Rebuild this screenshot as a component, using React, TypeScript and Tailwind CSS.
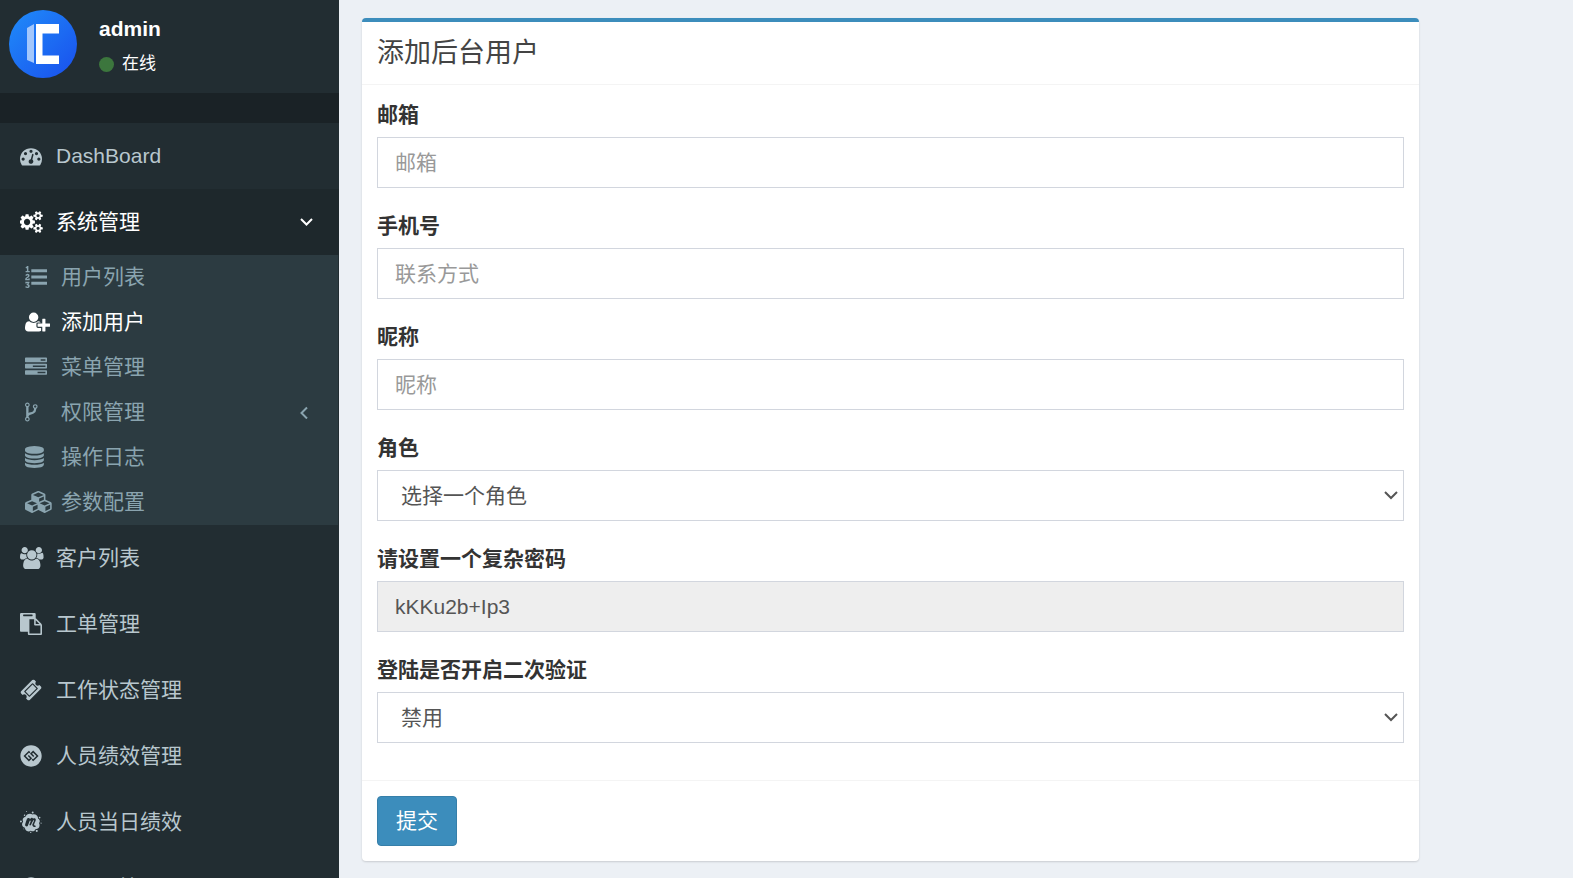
import React, { useState } from "react";
import { FaGgCircle, FaMeetup } from "react-icons/fa";

interface IconProps {
    path: string;
    viewBox: string;
}

function Icon({ path, viewBox }: IconProps) {
    return (
        <svg viewBox={viewBox} className="h-[22px] w-auto shrink-0" fill="currentColor" aria-hidden="true">
            <path d={path} />
        </svg>
    );
}

const icons = {
    dashboard: "M384 1152q0-53-37.5-90.5t-90.5-37.5-90.5 37.5-37.5 90.5 37.5 90.5 90.5 37.5 90.5-37.5 37.5-90.5zm192-448q0-53-37.5-90.5t-90.5-37.5-90.5 37.5-37.5 90.5 37.5 90.5 90.5 37.5 90.5-37.5 37.5-90.5zm428 481l101-382q6-26-7.5-48.5t-38.5-29.5-48 6.5-30 39.5l-101 382q-60 5-107 43.5t-63 98.5q-20 77 20 146t117 89 146-20 89-117q16-60-6-117t-72-91zm660-33q0-53-37.5-90.5t-90.5-37.5-90.5 37.5-37.5 90.5 37.5 90.5 90.5 37.5 90.5-37.5 37.5-90.5zm-640-640q0-53-37.5-90.5t-90.5-37.5-90.5 37.5-37.5 90.5 37.5 90.5 90.5 37.5 90.5-37.5 37.5-90.5zm448 192q0-53-37.5-90.5t-90.5-37.5-90.5 37.5-37.5 90.5 37.5 90.5 90.5 37.5 90.5-37.5 37.5-90.5zm320 448q0 261-141 483-19 29-54 29h-1402q-35 0-54-29-141-221-141-483 0-182 71-348t191-286 286-191 348-71 348 71 286 191 191 286 71 348z",
    cogs: "M832 896q0-106-75-181t-181-75-181 75-75 181 75 181 181 75 181-75 75-181zm768 512q0-52-38-90t-90-38-90 38-38 90q0 53 37.5 90.5t90.5 37.5 90.5-37.5 37.5-90.5zm0-1024q0-52-38-90t-90-38-90 38-38 90q0 53 37.5 90.5t90.5 37.5 90.5-37.5 37.5-90.5zm-384 421v185q0 10-7 19.5t-16 10.5l-155 24q-11 35-32 76 34 48 90 115 7 11 7 20 0 12-7 19-23 30-82.5 89.5t-78.5 59.5q-11 0-21-7l-115-90q-37 19-77 31-11 108-23 155-7 24-30 24h-186q-11 0-20-7.5t-10-17.5l-23-153q-34-10-75-31l-118 89q-7 7-20 7-11 0-21-8-144-133-144-160 0-9 7-19 10-14 41-53t47-61q-23-44-35-82l-152-24q-10-1-17-9.5t-7-19.5v-185q0-10 7-19.5t16-10.5l155-24q11-35 32-76-34-48-90-115-7-11-7-20 0-12 7-20 22-30 82-89t79-59q11 0 21 7l115 90q34-18 77-32 11-108 23-154 7-24 30-24h186q11 0 20 7.5t10 17.5l23 153q34 10 75 31l118-89q8-7 20-7 11 0 21 8 144 133 144 160 0 8-7 19-12 16-42 54t-45 60q23 48 34 82l152 23q10 2 17 10.5t7 19.5zm640 533v140q0 16-149 31-12 27-30 52 51 113 51 138 0 4-4 7-122 71-124 71-8 0-46-47t-52-68q-20 2-30 2t-30-2q-14 21-52 68t-46 47q-2 0-124-71-4-3-4-7 0-25 51-138-18-25-30-52-149-15-149-31v-140q0-16 149-31 13-29 30-52-51-113-51-138 0-4 4-7 4-2 35-20t59-34 30-16q8 0 46 46.5t52 67.5q20-2 30-2t30 2q51-71 92-112l6-2q4 0 124 70 4 3 4 7 0 25-51 138 17 23 30 52 149 15 149 31zm0-1024v140q0 16-149 31-12 27-30 52 51 113 51 138 0 4-4 7-122 71-124 71-8 0-46-47t-52-68q-20 2-30 2t-30-2q-14 21-52 68t-46 47q-2 0-124-71-4-3-4-7 0-25 51-138-18-25-30-52-149-15-149-31v-140q0-16 149-31 13-29 30-52-51-113-51-138 0-4 4-7 4-2 35-20t59-34 30-16q8 0 46 46.5t52 67.5q20-2 30-2t30 2q51-71 92-112l6-2q4 0 124 70 4 3 4 7 0 25-51 138 17 23 30 52 149 15 149 31z",
    listOl: "M381 1620q0 80-54.5 126t-135.5 46q-106 0-172-66l57-88q49 45 106 45 29 0 50.5-14.5t21.5-42.5q0-64-105-56l-26-56q8-10 32.5-43.5t42.5-54 37-38.5v-1q-16 0-48.5 1t-48.5 1v53h-106v-152h333v88l-95 115q51 12 81 49t30 88zm2-627v159h-362q-6-36-6-54 0-51 23.5-93t56.5-68 66-47.5 56.5-43.5 23.5-45q0-25-14.5-38.5t-39.5-13.5q-46 0-81 58l-85-59q24-51 71.5-79.5t105.5-28.5q73 0 123 41.5t50 112.5q0 50-34 91.5t-75 64.5-75.5 50.5-35.5 52.5h127v-60h105zm1409 319v192q0 13-9.5 22.5t-22.5 9.5h-1216q-13 0-22.5-9.5t-9.5-22.5v-192q0-14 9-23t23-9h1216q13 0 22.5 9.5t9.5 22.5zm-1408-899v99h-335v-99h107q0-41 .5-121.5t.5-121.5v-12h-2q-8 17-50 54l-71-76 136-127h106v404h108zm1408 387v192q0 13-9.5 22.5t-22.5 9.5h-1216q-13 0-22.5-9.5t-9.5-22.5v-192q0-14 9-23t23-9h1216q13 0 22.5 9.5t9.5 22.5zm0-512v192q0 13-9.5 22.5t-22.5 9.5h-1216q-13 0-22.5-9.5t-9.5-22.5v-192q0-13 9.5-22.5t22.5-9.5h1216q13 0 22.5 9.5t9.5 22.5z",
    userPlus: "M704 896q-159 0-271.5-112.5t-112.5-271.5 112.5-271.5 271.5-112.5 271.5 112.5 112.5 271.5-112.5 271.5-271.5 112.5zm960 128h352q13 0 22.5 9.5t9.5 22.5v192q0 13-9.5 22.5t-22.5 9.5h-352v352q0 13-9.5 22.5t-22.5 9.5h-192q-13 0-22.5-9.5t-9.5-22.5v-352h-352q-13 0-22.5-9.5t-9.5-22.5v-192q0-13 9.5-22.5t22.5-9.5h352v-352q0-13 9.5-22.5t22.5-9.5h192q13 0 22.5 9.5t9.5 22.5v352zm-736 224q0 52 38 90t90 38h256v238q-68 50-171 50h-874q-121 0-194-69t-73-190q0-53 3.5-103.5t14-109 26.5-108.5 43-97.5 62-81 85.5-53.5 111.5-20q19 0 39 17 79 61 154.5 91.5t164.5 30.5 164.5-30.5 154.5-91.5q20-17 39-17 132 0 217 96h-223q-52 0-90 38t-38 90v192z",
    tasks: "M1024 1408h640v-128h-640v128zm-384-512h1024v-128h-1024v128zm640-512h384v-128h-384v128zm512 832v256q0 26-19 45t-45 19h-1664q-26 0-45-19t-19-45v-256q0-26 19-45t45-19h1664q26 0 45 19t19 45zm0-512v256q0 26-19 45t-45 19h-1664q-26 0-45-19t-19-45v-256q0-26 19-45t45-19h1664q26 0 45 19t19 45zm0-512v256q0 26-19 45t-45 19h-1664q-26 0-45-19t-19-45v-256q0-26 19-45t45-19h1664q26 0 45 19t19 45z",
    codeFork: "M672 1472q0-40-28-68t-68-28-68 28-28 68 28 68 68 28 68-28 28-68zm0-1152q0-40-28-68t-68-28-68 28-28 68 28 68 68 28 68-28 28-68zm640 128q0-40-28-68t-68-28-68 28-28 68 28 68 68 28 68-28 28-68zm96 0q0 52-26 96.5t-70 69.5q-2 287-226 414-67 38-203 81-128 40-169.5 71t-41.5 100v26q44 25 70 69.5t26 96.5q0 80-56 136t-136 56-136-56-56-136q0-52 26-96.5t70-69.5v-820q-44-25-70-69.5t-26-96.5q0-80 56-136t136-56 136 56 56 136q0 52-26 96.5t-70 69.5v497q54-26 154-57 55-17 87.5-29.5t70.5-31 59-39.5 40.5-51 28-69.5 8.5-91.5q-44-25-70-69.5t-26-96.5q0-80 56-136t136-56 136 56 56 136z",
    database: "M896 768q237 0 443-43t325-127v170q0 69-103 128t-280 93.5-385 34.5-385-34.5-280-93.5-103-128v-170q119 84 325 127t443 43zm0 768q237 0 443-43t325-127v170q0 69-103 128t-280 93.5-385 34.5-385-34.5-280-93.5-103-128v-170q119 84 325 127t443 43zm0-384q237 0 443-43t325-127v170q0 69-103 128t-280 93.5-385 34.5-385-34.5-280-93.5-103-128v-170q119 84 325 127t443 43zm0-1152q208 0 385 34.5t280 93.5 103 128v128q0 69-103 128t-280 93.5-385 34.5-385-34.5-280-93.5-103-128v-128q0-69 103-128t280-93.5 385-34.5z",
    cubes: "M640 1632l384-192v-314l-384 164v342zm-64-454l404-173-404-173-404 173zm1088 454l384-192v-314l-384 164v342zm-64-454l404-173-404-173-404 173zm-448-293l384-165v-266l-384 164v267zm-64-379l441-189-441-189-441 189zm1088 518v416q0 36-19 67t-52 47l-448 224q-25 14-57 14t-57-14l-448-224q-4-2-7-4-2 2-7 4l-448 224q-25 14-57 14t-57-14l-448-224q-33-16-52-47t-19-67v-416q0-38 21.5-70t56.5-48l434-186v-400q0-38 21.5-70t56.5-48l448-192q23-10 50-10t50 10l448 192q35 16 56.5 48t21.5 70v400l434 186q36 16 57 48t21 70z",
    users: "M593 896q-162 5-265 128h-134q-82 0-138-40.5t-56-118.5q0-353 124-353 6 0 43.5 21t97.5 42.5 119 21.5q67 0 133-23-5 37-5 66 0 159 81 295zm1071 637q0 120-73 189.5t-194 69.5h-874q-121 0-194-69.5t-73-189.5q0-53 3.5-103.5t14-109 26.5-108.5 43-97.5 62-81 85.5-53.5 111.5-20q10 0 43 21.5t73 48 107 48 135 21.5 135-21.5 107-48 73-48 43-21.5q61 0 111.5 20t85.5 53.5 62 81 43 97.5 26.5 108.5 14 109 3.5 103.5zm-1024-1277q0 106-75 181t-181 75-181-75-75-181 75-181 181-75 181 75 75 181zm704 384q0 159-112.5 271.5t-271.5 112.5-271.5-112.5-112.5-271.5 112.5-271.5 271.5-112.5 271.5 112.5 112.5 271.5zm576 225q0 78-56 118.5t-138 40.5h-134q-103-123-265-128 81-136 81-295 0-29-5-66 66 23 133 23 59 0 119-21.5t97.5-42.5 43.5-21q124 0 124 353zm-128-609q0 106-75 181t-181 75-181-75-75-181 75-181 181-75 181 75 75 181z",
    paste: "M768 1664h896v-640h-416q-40 0-68-28t-28-68v-416h-384v1152zm256-1440v-64q0-13-9.5-22.5t-22.5-9.5h-704q-13 0-22.5 9.5t-9.5 22.5v64q0 13 9.5 22.5t22.5 9.5h704q13 0 22.5-9.5t9.5-22.5zm256 672h299l-299-299v299zm512 128v672q0 40-28 68t-68 28h-960q-40 0-68-28t-28-68v-160h-544q-40 0-68-28t-28-68v-1344q0-40 28-68t68-28h1088q40 0 68 28t28 68v328q21 13 36 28l408 408q28 28 48 76t20 88z",
    ticket: "M1024 452l316 316-572 572-316-316zm-211 979l618-618q19-19 19-45t-19-45l-362-362q-18-18-45-18t-45 18l-618 618q-19 19-19 45t19 45l362 362q18 18 45 18t45-18zm889-637l-907 908q-37 37-90.5 37t-90.5-37l-126-126q56-56 56-136t-56-136-136-56-136 56l-125-126q-37-37-37-90.5t37-90.5l907-906q37-37 90.5-37t90.5 37l125 125q-56 56-56 136t56 136 136 56 136-56l126 125q37 37 37 90.5t-37 90.5z",
};

interface MenuItem {
    label: string;
    icon: React.ReactNode;
    active?: boolean;
    arrow?: boolean;
}

const subMenu: MenuItem[] = [
    { label: "用户列表", icon: <Icon path={icons.listOl} viewBox="0 0 1792 1792" /> },
    { label: "添加用户", icon: <Icon path={icons.userPlus} viewBox="0 0 2048 1792" />, active: true },
    { label: "菜单管理", icon: <Icon path={icons.tasks} viewBox="0 0 1792 1792" /> },
    { label: "权限管理", icon: <Icon path={icons.codeFork} viewBox="384 0 1024 1792" />, arrow: true },
    { label: "操作日志", icon: <Icon path={icons.database} viewBox="128 0 1536 1792" /> },
    { label: "参数配置", icon: <Icon path={icons.cubes} viewBox="0 0 2304 1792" /> },
];

const mainMenu: MenuItem[] = [
    { label: "客户列表", icon: <Icon path={icons.users} viewBox="0 0 1920 1792" /> },
    { label: "工单管理", icon: <Icon path={icons.paste} viewBox="0 0 1792 1792" /> },
    { label: "工作状态管理", icon: <Icon path={icons.ticket} viewBox="0 0 1792 1792" /> },
    { label: "人员绩效管理", icon: <FaGgCircle className="size-[22px]" /> },
    { label: "人员当日绩效", icon: <FaMeetup className="size-[22px]" /> },
    { label: "一二一管理", icon: <FaGgCircle className="size-[22px]" /> },
];

function Logo() {
    return (
        <svg viewBox="0 0 68 68" className="size-[68px] shrink-0" role="img" aria-label="logo">
            <defs>
                <linearGradient id="logo-bg" x1="0" y1="0" x2="1" y2="1">
                    <stop offset="0.1" stopColor="#1f86f8" />
                    <stop offset="0.9" stopColor="#1a55ee" />
                </linearGradient>
            </defs>
            <circle cx="34" cy="34" r="34" fill="url(#logo-bg)" />
            <path d="M18 18l7-4v39l-7-3z" fill="#a3c7fc" />
            <path d="M27 14h23v9.500H33.500v22H50v8.500H27z" fill="#fff" />
        </svg>
    );
}

function Sidebar() {
    return (
        <aside className="w-[339px] shrink-0 bg-[#222d32] text-[#b8c7ce]">
            <div className="flex h-[93px] items-start gap-[22px] px-[9px] pt-[10px] text-white">
                <Logo />
                <div className="pt-1">
                    <p className="text-[21px] leading-[30px] font-bold">admin</p>
                    <a href="#" className="mt-[5px] flex items-center gap-2 text-[17px] leading-[30px]">
                        <span className="size-[15px] rounded-full bg-[#3c763d]" />
                        在线
                    </a>
                </div>
            </div>
            <div className="h-[30px] bg-[#1a2226]" />
            <nav>
                <a href="#" className="flex h-[66px] items-center px-5">
                    <span className="w-[36px]">
                        <Icon path={icons.dashboard} viewBox="0 0 1792 1792" />
                    </span>
                    DashBoard
                </a>
                <a href="#" className="flex h-[66px] items-center bg-[#1e282c] px-5 text-white">
                    <span className="w-[36px]">
                        <Icon path={icons.cogs} viewBox="0 0 1920 1792" />
                    </span>
                    <span className="flex-1">系统管理</span>
                    <svg viewBox="0 0 14 10" className="mr-1.5 w-[14px]" fill="none" stroke="currentColor" strokeWidth="2">
                        <path d="M2 2l5.500 5.500L13 2" />
                    </svg>
                </a>
                <ul className="mr-px bg-[#2c3b41] text-[#8aa4af]">
                    {subMenu.map((item) => (
                        <li key={item.label}>
                            <a href="#" className={`flex h-[45px] items-center pr-[30px] pb-0.5 pl-[25px] ${item.active ? "text-white" : ""}`}>
                                <span className="w-[36px]">{item.icon}</span>
                                <span className="flex-1">{item.label}</span>
                                {item.arrow && (
                                    <svg viewBox="0 0 8 14" className="h-[14px]" fill="none" stroke="currentColor" strokeWidth="2">
                                        <path d="M7 2.500L1.500 8 7 13.500" />
                                    </svg>
                                )}
                            </a>
                        </li>
                    ))}
                </ul>
                {mainMenu.map((item) => (
                    <a key={item.label} href="#" className="flex h-[66px] items-center px-5">
                        <span className="w-[36px]">{item.icon}</span>
                        {item.label}
                    </a>
                ))}
            </nav>
        </aside>
    );
}

const controlClass = "block h-[51px] w-full border border-[#d2d6de] text-[#555] outline-none";
const inputClass = `${controlClass} bg-white px-[17px] placeholder:text-[#999]`;

function Field({ id, label, children }: { id: string; label: string; children: React.ReactNode }) {
    return (
        <div className="mb-[23px]">
            <label htmlFor={id} className="mb-[7px] block leading-[30px] font-bold">
                {label}
            </label>
            {children}
        </div>
    );
}

function SelectBox({ id, options }: { id: string; options: string[] }) {
    return (
        <div className="relative">
            <select id={id} className={`${controlClass} appearance-none bg-white pr-[30px] pl-[23px]`}>
                {options.map((option) => (
                    <option key={option}>{option}</option>
                ))}
            </select>
            <svg
                viewBox="0 0 14 10"
                className="pointer-events-none absolute top-[20px] right-[6px] w-[14px]"
                fill="none"
                stroke="#555"
                strokeWidth="2"
            >
                <path d="M1 2l6 6 6-6" />
            </svg>
        </div>
    );
}

export default function App() {
    const [email, setEmail] = useState("");
    const [phone, setPhone] = useState("");
    const [nickname, setNickname] = useState("");

    return (
        <div className="flex h-screen overflow-hidden bg-[#ecf0f5] font-['Liberation_Sans','Noto_Sans_CJK_SC',sans-serif] text-[21px] leading-[30px] text-[#333]">
            <Sidebar />
            <main className="min-w-0 flex-1 px-[23px] pt-[18px]">
                <form
                    onSubmit={(e) => e.preventDefault()}
                    className="w-full max-w-[1057px] rounded-[4px] border-t-4 border-[#3c8dbc] bg-white shadow-[0_1px_2px_rgba(0,0,0,0.15)]"
                >
                    <div className="border-b border-[#f4f4f4] p-[15px]">
                        <h3 className="text-[27px] leading-[32px] text-[#444]">添加后台用户</h3>
                    </div>
                    <div className="px-[15px] pt-[15px] pb-[14px]">
                        <Field id="email" label="邮箱">
                            <input id="email" type="text" placeholder="邮箱" value={email} onChange={(e) => setEmail(e.target.value)} className={inputClass} />
                        </Field>
                        <Field id="phone" label="手机号">
                            <input id="phone" type="text" placeholder="联系方式" value={phone} onChange={(e) => setPhone(e.target.value)} className={inputClass} />
                        </Field>
                        <Field id="nickname" label="昵称">
                            <input id="nickname" type="text" placeholder="昵称" value={nickname} onChange={(e) => setNickname(e.target.value)} className={inputClass} />
                        </Field>
                        <Field id="role" label="角色">
                            <SelectBox id="role" options={["选择一个角色"]} />
                        </Field>
                        <Field id="password" label="请设置一个复杂密码">
                            <input id="password" type="text" readOnly value="kKKu2b+Ip3" className={`${controlClass} bg-[#eee] px-[17px]`} />
                        </Field>
                        <Field id="two-factor" label="登陆是否开启二次验证">
                            <SelectBox id="two-factor" options={["禁用", "启用"]} />
                        </Field>
                    </div>
                    <div className="border-t border-[#f4f4f4] p-[15px]">
                        <button type="submit" className="h-[50px] rounded-[4px] border border-[#367fa9] bg-[#3c8dbc] px-[18px] text-white">
                            提交
                        </button>
                    </div>
                </form>
            </main>
        </div>
    );
}
